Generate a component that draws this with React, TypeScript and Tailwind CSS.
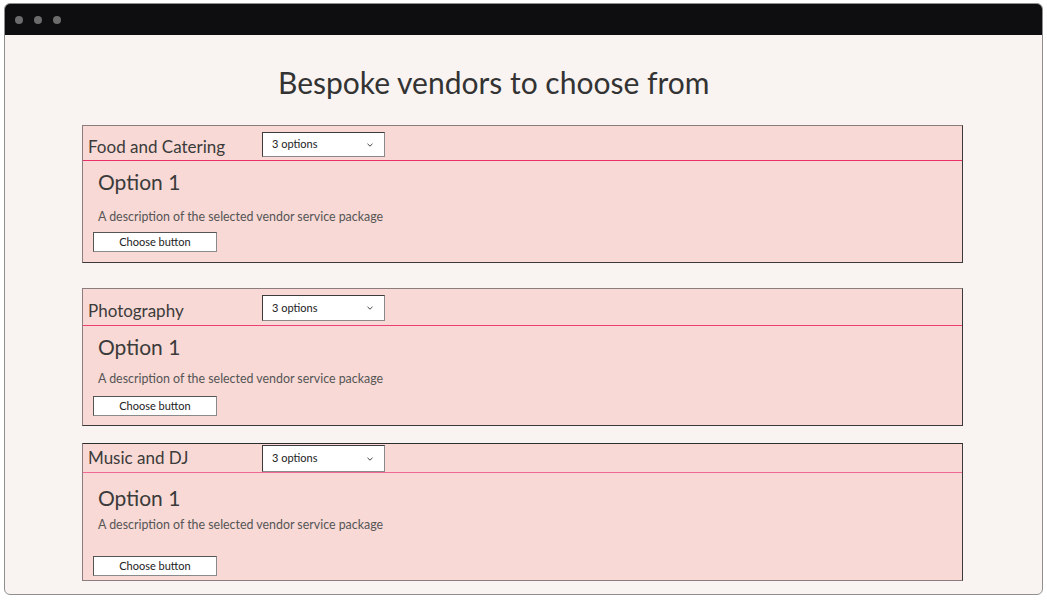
import React from "react";

type CardProps = {
  title: string;
  headerH: string;
  labelPt: string;
  selectMt: string;
  selectH: string;
  bodyPt: string;
  descMt: string;
  btnMt: string;
  bodyPb: string;
  borderCls: string;
  lineCls: string;
  cardMt: string;
};

function Chevron() {
  return (
    <svg width="8" height="6" viewBox="0 0 8 6" fill="none">
      <path d="M1.5 1.8 L4 4.2 L6.5 1.8" stroke="#444" strokeWidth="1" />
    </svg>
  );
}

function Card(p: CardProps) {
  return (
    <div className={`${p.cardMt} ml-[77px] w-[881px] bg-[#f8d9d5] border ${p.borderCls}`}>
      <div className={`${p.headerH} flex items-start`}>
        <div className={`w-[179px] pl-[5px] ${p.labelPt} text-[17px] leading-[22px] text-[#3b3b3b]`}>
          {p.title}
        </div>
        <div
          className={`${p.selectMt} ${p.selectH} w-[123px] bg-white border border-t-[#3c3c3c] border-l-[#3c3c3c] border-r-[#8a8a8a] border-b-[#8a8a8a] flex items-center justify-between pl-[9px] pr-[10px]`}
        >
          <span className="text-[11px] text-[#222]">3 options</span>
          <Chevron />
        </div>
      </div>
      <div className={`h-[1px] ${p.lineCls}`} />
      <div className={`${p.bodyPt} ${p.bodyPb}`}>
        <div className="pl-[15px] text-[21px] leading-[26px] text-[#3b3b3b]">Option 1</div>
        <div className={`${p.descMt} pl-[15px] text-[12.4px] leading-[16px] text-[#555]`}>
          A description of the selected vendor service package
        </div>
        <div className={`${p.btnMt} ml-[10px] w-[124px] h-[20px] bg-white border border-t-[#555] border-l-[#555] border-r-[#8a8a8a] border-b-[#8a8a8a] flex items-center justify-center text-[11px] text-[#222]`}>
          Choose button
        </div>
      </div>
    </div>
  );
}

export default function App() {
  return (
    <div
      className="w-[1047px] h-[600px] bg-white pt-[3px] px-[4px]"
      style={{ fontFamily: "Lato, 'Open Sans', sans-serif" }}
    >
      <div className="h-[592px] rounded-[6px] border border-[#8f8f8f] overflow-hidden bg-[#f9f4f1]">
        <div className="h-[31px] bg-[#0e0e10] flex items-center gap-[11px] pl-[10px]">
          <div className="w-[8px] h-[8px] rounded-full bg-[#6c6c6c]" />
          <div className="w-[8px] h-[8px] rounded-full bg-[#6c6c6c]" />
          <div className="w-[8px] h-[8px] rounded-full bg-[#6c6c6c]" />
        </div>
        <div className="pt-[29px] pl-[273px] text-[30px] leading-[36px] text-[#333]">
          Bespoke vendors to choose from
        </div>
        <Card
          title="Food and Catering"
          cardMt="mt-[25px]"
          headerH="h-[34px]"
          labelPt="pt-[10px]"
          selectMt="mt-[6px]"
          selectH="h-[25px]"
          bodyPt="pt-[8px]"
          descMt="mt-[14px]"
          btnMt="mt-[7px]"
          bodyPb="pb-[10px]"
          borderCls="border-t-[#8b7d7d] border-l-[#8b7d7d] border-r-[#3a3a3a] border-b-[#3a3a3a]"
          lineCls="bg-[#e92f6a]"
        />
        <Card
          title="Photography"
          cardMt="mt-[25px]"
          headerH="h-[36px]"
          labelPt="pt-[11px]"
          selectMt="mt-[6px]"
          selectH="h-[26px]"
          bodyPt="pt-[8px]"
          descMt="mt-[11px]"
          btnMt="mt-[9px]"
          bodyPb="pb-[9px]"
          borderCls="border-t-[#8b7d7d] border-l-[#8b7d7d] border-r-[#3a3a3a] border-b-[#3a3a3a]"
          lineCls="bg-[#ec3f74]"
        />
        <Card
          title="Music and DJ"
          cardMt="mt-[17px]"
          headerH="h-[28px]"
          labelPt="pt-[3px]"
          selectMt="mt-[1px]"
          selectH="h-[27px]"
          bodyPt="pt-[12px]"
          descMt="mt-[6px]"
          btnMt="mt-[23px]"
          bodyPb="pb-[4px]"
          borderCls="border-t-[#2e2e2e] border-l-[#8b7d7d] border-r-[#3a3a3a] border-b-[#8b7d7d]"
          lineCls="bg-[#f06a95]"
        />
      </div>
    </div>
  );
}
